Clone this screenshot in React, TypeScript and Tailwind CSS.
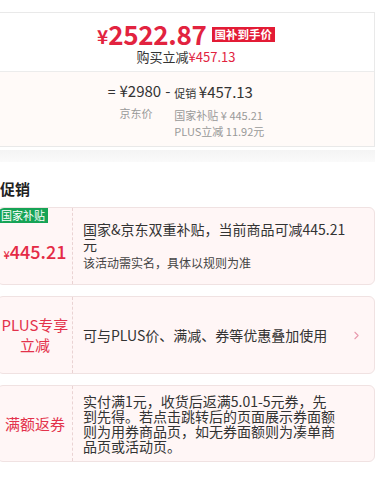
import { ChevronRight } from 'lucide-react'

const font = { fontFamily: '"Noto Sans CJK SC", "Noto Sans", sans-serif' }

function PriceCard() {
  return (
    <div className="mt-[12px] border border-[#e9e9e9] bg-white">
      <div className="flex h-[59px] flex-col items-center border-b border-[#ececec] pt-[8px]">
        <div className="flex h-[26px] items-center">
          <span className="mt-[4px] text-[19px] font-bold leading-[22px] text-[#e2233f]">¥</span>
          <span className="text-[26px] font-bold leading-[26px] tracking-[-0.3px] text-[#e2233f]">2522.87</span>
          <span className="ml-[5px] mt-[1px] bg-[#e31b35] px-[3px] text-[11.5px] font-bold leading-[15px] text-white">国补到手价</span>
        </div>
        <div className="mt-[2px] text-[13px] leading-[16px] text-[#333]">
          购买立减<span className="text-[#e2233f]">¥457.13</span>
        </div>
      </div>
      <div className="flex h-[74px] justify-center bg-[#fffaf8] pt-[8px]">
        <div className="flex text-[#333]">
          <span className="mr-[4px] text-[14px] leading-[22px]">=</span>
          <div className="flex flex-col">
            <span className="text-[15px] leading-[22px]">¥2980</span>
            <span className="mt-[3px] text-[11px] leading-[16px] text-[#999]">京东价</span>
          </div>
          <span className="mx-[4px] text-[15px] leading-[22px]">-</span>
          <div className="flex flex-col">
            <span className="leading-[22px]">
              <span className="text-[11px]">促销 </span>
              <span className="text-[15px]">¥457.13</span>
            </span>
            <span className="mt-[3px] text-[11px] leading-[16px] text-[#999]">国家补贴 ¥ 445.21</span>
            <span className="text-[11px] leading-[16px] text-[#999]">PLUS立减 11.92元</span>
          </div>
        </div>
      </div>
    </div>
  )
}

function PromoCard({ left, children, arrow, height }: { left: React.ReactNode; children: React.ReactNode; arrow?: boolean; height: string }) {
  return (
    <div className={`relative flex ${height} rounded-[6px] border border-[#f0e2e2] bg-[#fff6f6]`}>
      <div className="flex w-[75px] shrink-0 flex-col items-center justify-center border-r border-dashed border-[#ead3d3]">
        {left}
      </div>
      <div className="flex flex-1 items-center pl-[10px]">{children}</div>
      {arrow && (
        <div className="flex items-center pr-[11px]">
          <ChevronRight size={13} strokeWidth={2} className="text-[#e89aae]" />
        </div>
      )}
    </div>
  )
}

export default function App() {
  return (
    <div className="h-[488px] w-[387px] overflow-hidden bg-white" style={font}>
      <div className="-ml-[3px] w-[378px]">
        <PriceCard />
        <div className="mt-[3px] h-[12px] bg-gradient-to-b from-[#f4f4f4] to-[#fafafa]" />
        <div className="pl-[3px] pt-[17px] text-[15px] font-bold leading-[20px] text-[#222]">促销</div>

        <div className="mt-[8px] flex flex-col gap-[11px]">
          <PromoCard
            height="h-[78px]"
            left={
              <>
                <span className="absolute left-0 top-0 rounded-tl-[6px] bg-[#16a356] px-[3px] text-[11px] leading-[15px] text-white">国家补贴</span>
                <span className="mt-[12px] font-medium leading-[24px] text-[#e42a45]">
                  <span className="text-[11px]">¥</span>
                  <span className="text-[18px]">445.21</span>
                </span>
              </>
            }
          >
            <div className="w-[272px] text-[#333]">
              <p className="text-[14px] leading-[15px]">国家&京东双重补贴，当前商品可减445.21元</p>
              <p className="mt-[3px] text-[12px] leading-[16px] text-[#444]">该活动需实名，具体以规则为准</p>
            </div>
          </PromoCard>

          <PromoCard
            height="h-[78px]"
            arrow
            left={<span className="text-center text-[15px] leading-[20px] text-[#e3324b]">PLUS专享<br />立减</span>}
          >
            <p className="text-[14px] leading-[18px] text-[#333]">可与PLUS价、满减、券等优惠叠加使用</p>
          </PromoCard>

          <PromoCard
            height="h-[77px]"
            left={<span className="text-[15px] leading-[20px] text-[#e3324b]">满额返券</span>}
          >
            <p className="w-[254px] text-[14px] leading-[15px] text-[#333]">
              实付满1元，收货后返满5.01-5元券，先到先得。若点击跳转后的页面展示券面额则为用券商品页，如无券面额则为凑单商品页或活动页。
            </p>
          </PromoCard>
        </div>
      </div>
    </div>
  )
}
